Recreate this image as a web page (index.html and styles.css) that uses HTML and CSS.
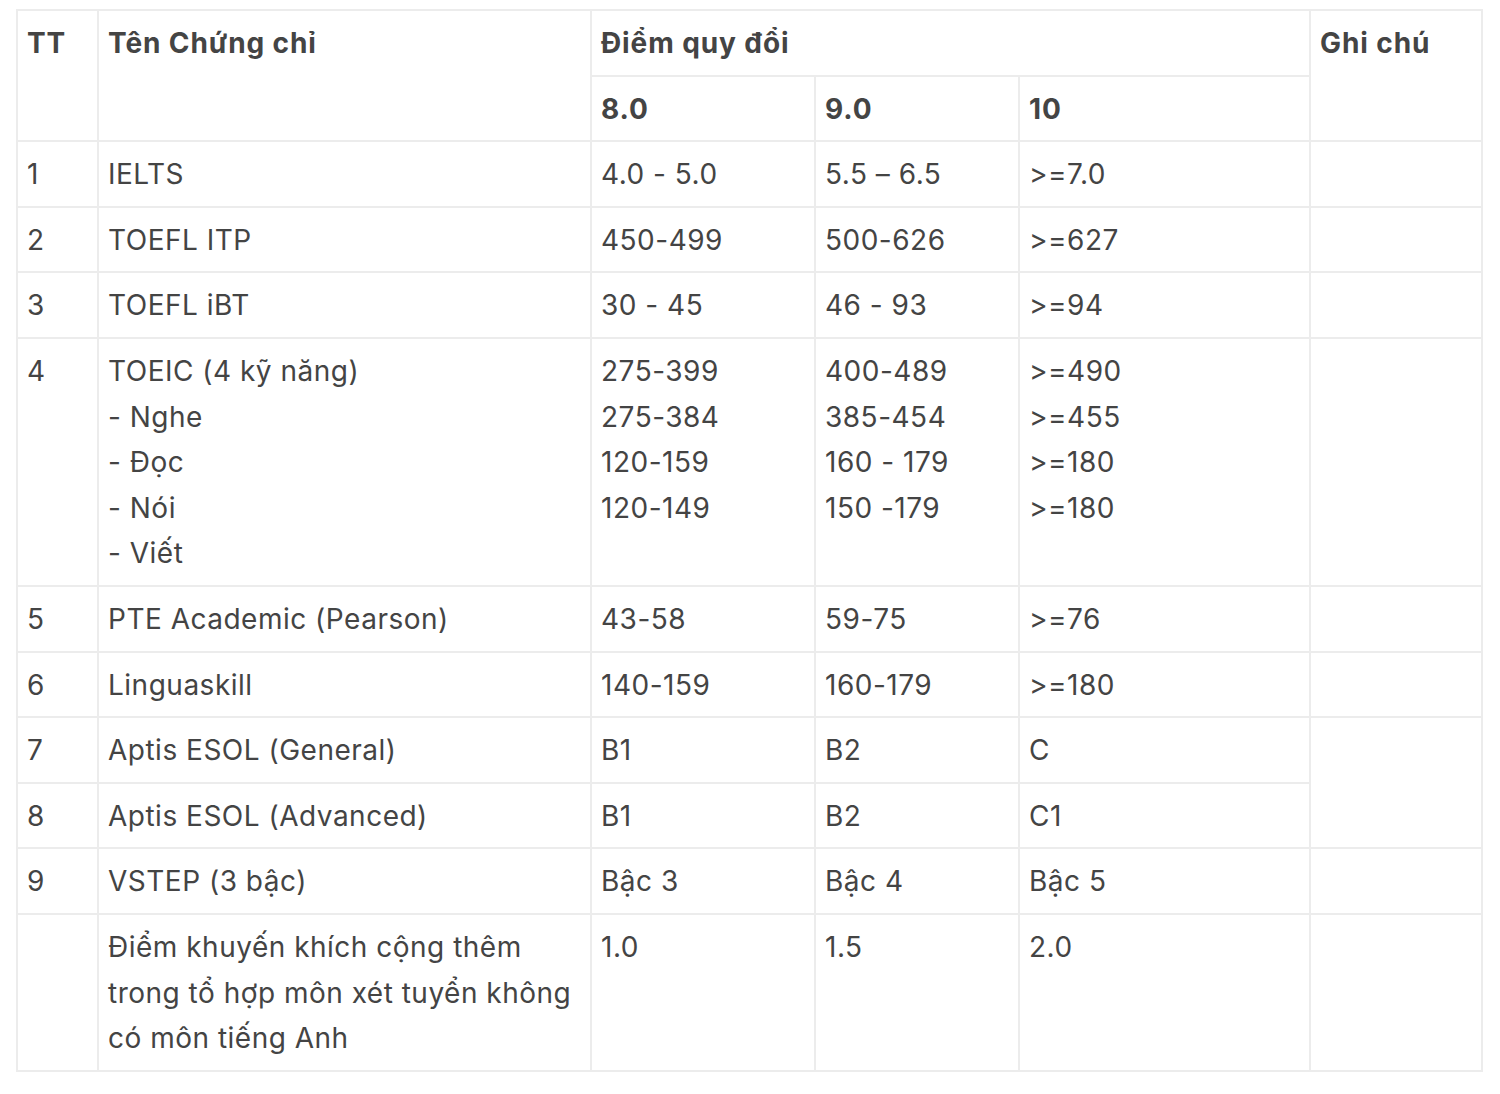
FILE: index.html
```html
<!DOCTYPE html>
<html lang="vi">
<head>
<meta charset="utf-8">
<title>Bảng quy đổi điểm chứng chỉ</title>
<link rel="stylesheet" href="styles.css">
</head>
<body>
<div class="wrap">
<table class="score-table">
  <colgroup>
    <col class="c-tt"><col class="c-name"><col class="c-8"><col class="c-9"><col class="c-10"><col class="c-note">
  </colgroup>
  <thead>
    <tr>
      <th rowspan="2">TT</th>
      <th rowspan="2">Tên Chứng chỉ</th>
      <th colspan="3">Điểm quy đổi</th>
      <th rowspan="2">Ghi chú</th>
    </tr>
    <tr>
      <th>8.0</th>
      <th>9.0</th>
      <th>10</th>
    </tr>
  </thead>
  <tbody>
    <tr><td>1</td><td>IELTS</td><td>4.0 - 5.0</td><td>5.5 – 6.5</td><td>&gt;=7.0</td><td></td></tr>
    <tr><td>2</td><td>TOEFL ITP</td><td>450-499</td><td>500-626</td><td>&gt;=627</td><td></td></tr>
    <tr><td>3</td><td>TOEFL iBT</td><td>30 - 45</td><td>46 - 93</td><td>&gt;=94</td><td></td></tr>
    <tr>
      <td>4</td>
      <td>TOEIC (4 kỹ năng)<br>- Nghe<br>- Đọc<br>- Nói<br>- Viết</td>
      <td>275-399<br>275-384<br>120-159<br>120-149</td>
      <td>400-489<br>385-454<br>160 - 179<br>150 -179</td>
      <td>&gt;=490<br>&gt;=455<br>&gt;=180<br>&gt;=180</td>
      <td></td>
    </tr>
    <tr><td>5</td><td>PTE Academic (Pearson)</td><td>43-58</td><td>59-75</td><td>&gt;=76</td><td></td></tr>
    <tr><td>6</td><td>Linguaskill</td><td>140-159</td><td>160-179</td><td>&gt;=180</td><td></td></tr>
    <tr><td>7</td><td>Aptis ESOL (General)</td><td>B1</td><td>B2</td><td>C</td><td rowspan="2"></td></tr>
    <tr><td>8</td><td>Aptis ESOL (Advanced)</td><td>B1</td><td>B2</td><td>C1</td></tr>
    <tr><td>9</td><td>VSTEP (3 bậc)</td><td>Bậc 3</td><td>Bậc 4</td><td>Bậc 5</td><td></td></tr>
    <tr><td></td><td>Điểm khuyến khích cộng thêm trong tổ hợp môn xét tuyển không có môn tiếng Anh</td><td>1.0</td><td>1.5</td><td>2.0</td><td></td></tr>
  </tbody>
</table>
</div>
</body>
</html>
```
FILE: styles.css
```css
html, body {
  margin: 0;
  padding: 0;
  background: #ffffff;
}

.wrap {
  padding: 9px 16px 0 16px;
}

.score-table {
  width: 1465px;
  border-collapse: collapse;
  table-layout: fixed;
  font-family: Inter, "Open Sans", sans-serif;
  font-size: 28px;
  line-height: 45.6px;
  color: #444444;
}

.c-tt { width: 81px; }
.c-name { width: 493px; }
.c-8 { width: 224px; }
.c-9 { width: 204px; }
.c-10 { width: 291px; }
.c-note { width: 172px; }

.score-table th,
.score-table td {
  border: 2px solid #ececec;
  padding: 10px 9px 8px 9px;
  text-align: left;
  vertical-align: top;
  letter-spacing: 0.5px;
}

.score-table th {
  font-weight: 700;
  letter-spacing: 0.9px;
}
```
